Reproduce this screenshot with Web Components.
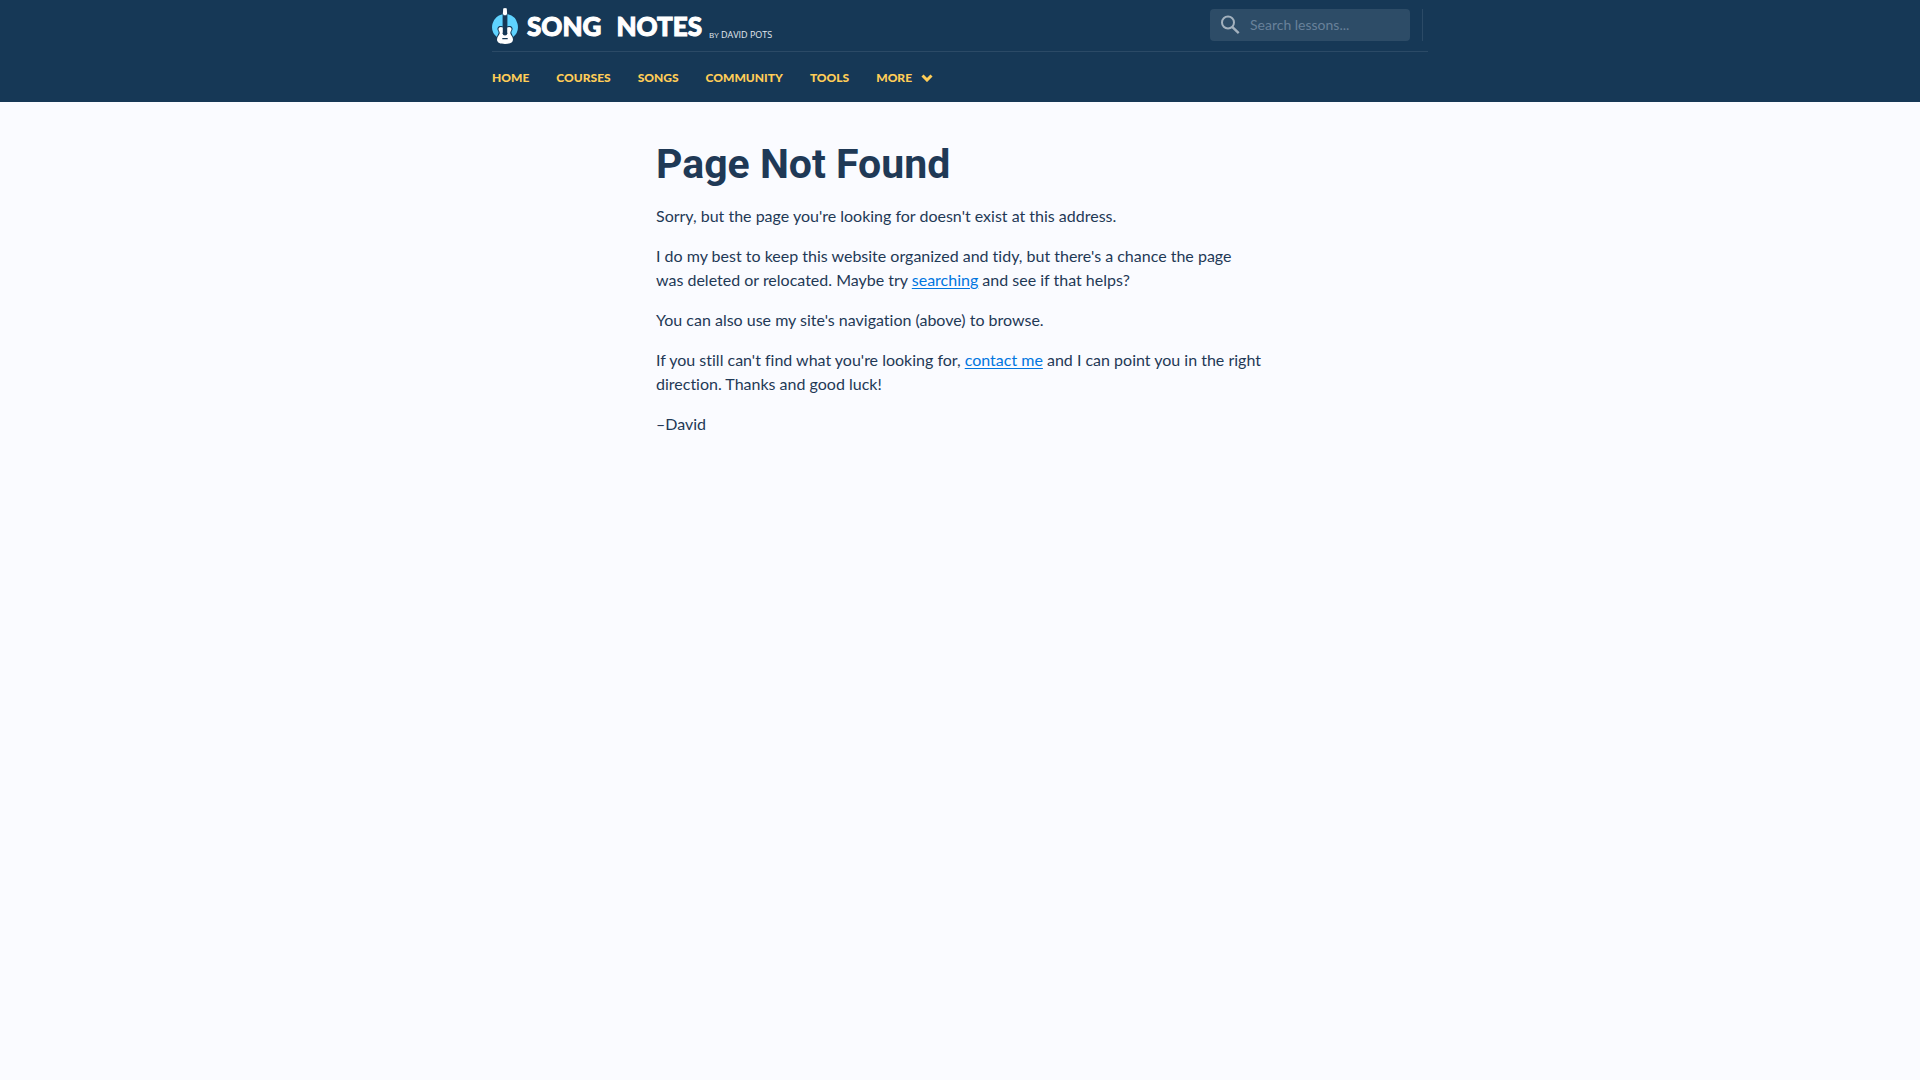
<!DOCTYPE html>
<html lang="en">
<head>
<meta charset="utf-8">
<meta name="viewport" content="width=device-width, initial-scale=1">
<title>Page Not Found – Song Notes</title>
<style>
  body { margin: 0; min-height: 100vh; background: #fafbff; color: #1f3956; font: 16px/24px Lato, "Open Sans", sans-serif; font-variant-ligatures: none; }
  h1 { margin: 0 0 18px; font: 700 41px/44px Roboto, sans-serif; }
  p { margin: 0 0 16px; }
  p a { color: #0076df; text-underline-offset: 2px; }
</style>
</head>
<body>
<site-header>
  <site-logo slot="logo" href="#"></site-logo>
  <search-box slot="tools"></search-box>
  <nav-item slot="nav" href="#">Home</nav-item>
  <nav-item slot="nav" href="#">Courses</nav-item>
  <nav-item slot="nav" href="#">Songs</nav-item>
  <nav-item slot="nav" href="#">Community</nav-item>
  <nav-item slot="nav" href="#">Tools</nav-item>
  <nav-menu slot="nav">More</nav-menu>
</site-header>
<page-content>
  <h1>Page Not Found</h1>
  <p>Sorry, but the page you're looking for doesn't exist at this address.</p>
  <p>I do my best to keep this website organized and tidy, but there's a chance the page was&nbsp;deleted or relocated. Maybe try <a href="#">searching</a> and see if that helps?</p>
  <p>You can also use my site's navigation (above) to browse.</p>
  <p>If you still can't find what you're looking for, <a href="#">contact me</a> and I can point you in the right direction. Thanks and good luck!</p>
  <p>–David</p>
</page-content>
<script>
  const define = (name, html, setup) => {
    const template = document.createElement('template');
    template.innerHTML = html;
    customElements.define(name, class extends HTMLElement {
      constructor() {
        super();
        this.attachShadow({ mode: 'open' }).append(template.content.cloneNode(true));
      }
      connectedCallback() { if (setup) setup(this, this.shadowRoot); }
    });
  };
  const passHref = (host, root) => { root.querySelector('a').href = host.getAttribute('href'); };

  define('site-header', `
    <style>
      :host { display: block; background: #163856; }
      header { max-width: 936px; margin: 0 auto; }
      .top { display: flex; align-items: center; justify-content: space-between; height: 51px; border-bottom: 1px solid #2b4a66; }
      .tools { display: flex; padding: 0 5px 1px 0; }
      .tools::after { content: ""; width: 1px; margin-left: 12px; background: #2b4a66; }
      nav { display: flex; align-items: center; gap: 27px; padding: 16px 0 14px; }
    </style>
    <header>
      <div class="top">
        <slot name="logo"></slot>
        <div class="tools"><slot name="tools"></slot></div>
      </div>
      <nav aria-label="Main"><slot name="nav"></slot></nav>
    </header>`);

  define('site-logo', `
    <style>
      :host { display: block; }
      a { display: flex; align-items: center; color: #fff; text-decoration: none; white-space: nowrap; }
      svg { display: block; width: 26px; height: 36px; margin-right: 9px; }
      .name { display: flex; gap: 15px; font: 900 26px/36px Lato, sans-serif; -webkit-text-stroke: 1px #fff; }
      .by { align-self: flex-end; margin-left: 7px; font: 9px/18px "Open Sans", sans-serif; color: #e3e9ef; }
      small { font-size: 8px; }
    </style>
    <a>
      <svg viewBox="0 0 26 36" aria-hidden="true">
        <path fill="#5fd3ff" d="M10.6 6.2A13 13 0 0 0 5 29.1C5.2 27.3 6.4 26.1 6.6 24.8C6.9 23 5 22.3 5.5 20.2C6 18 8.4 17.7 10.6 18.5ZM15.4 6.2A13 13 0 0 1 21 29.1C20.8 27.3 19.6 26.1 19.4 24.8C19.1 23 21 22.3 20.5 20.2C20 18 17.6 17.7 15.4 18.5Z"/>
        <path fill="#fff" d="M11.2 .6Q13 -.5 14.8 .6L15.1 5.2L14.4 7.2H11.6L10.9 5.2Z"/>
        <path fill="#fff" d="M10.8 19.6V25.5H15.2V19.6C17.1 18.5 19.3 19.1 19.5 21C19.7 22.6 18.1 23.4 18.3 25.3C18.5 27.2 21 28.6 21 31.6C21 35 17.5 36 13 36S5 35 5 31.6C5 28.6 7.5 27.2 7.7 25.3C7.9 23.4 6.3 22.6 6.5 21C6.7 19.1 8.9 18.5 10.8 19.6Z"/>
        <path fill="#163856" d="M12.1 8H13.9V26H12.1ZM10.3 30H15.7V31.3H10.3Z"/>
        <circle cx="13" cy="25.3" r="2.3" fill="#163856"/>
      </svg>
      <span class="name"><span>SONG</span> <span>NOTES</span></span>
      <span class="by"><small>BY</small> DAVID POTS</span>
    </a>`, passHref);

  define('search-box', `
    <style>
      :host { display: block; }
      form { display: flex; align-items: center; box-sizing: border-box; width: 200px; height: 32px; padding: 0 10px; border-radius: 4px; background: #2d4c67; }
      label { display: flex; margin-right: 10px; }
      svg { display: block; width: 20px; height: 20px; }
      input { flex: 1; min-width: 0; padding: 0; border: 0; outline: 0; background: none; color: #fff; font: 14px/20px Lato, sans-serif; }
      input::placeholder { color: #68819a; opacity: 1; }
    </style>
    <form role="search">
      <label for="q" aria-label="Search lessons">
        <svg viewBox="0 0 20 20" fill="none" stroke="#a3b1be" aria-hidden="true">
          <circle cx="8" cy="7.5" r="6" stroke-width="2"/>
          <path stroke-width="2.4" d="M12.2 11.8L18.7 18.2"/>
        </svg>
      </label>
      <input id="q" type="search" placeholder="Search lessons...">
    </form>`);

  define('nav-item', `
    <style>
      :host { display: block; }
      a { display: block; color: #ffcd57; text-decoration: none; text-transform: uppercase; font: 900 12px/20px Lato, sans-serif; }
    </style>
    <a><slot></slot></a>`, passHref);

  define('nav-menu', `
    <style>
      :host { display: block; }
      button { display: flex; align-items: center; gap: 9px; padding: 0; border: 0; background: none; color: #ffcd57; text-transform: uppercase; font: 900 12px/20px Lato, sans-serif; cursor: pointer; }
      svg { display: block; width: 12px; height: 8px; }
    </style>
    <button type="button" aria-haspopup="true">
      <slot></slot>
      <svg viewBox="0 0 12 8" fill="none" stroke="currentColor" stroke-width="3" aria-hidden="true"><path d="M1.5 1.5L6 6L10.5 1.5"/></svg>
    </button>`);

  define('page-content', `
    <style>
      :host { display: block; }
      main { max-width: 608px; margin: 0 auto; padding: 40px 16px 24px; }
    </style>
    <main><slot></slot></main>`);
</script>
</body>
</html>
